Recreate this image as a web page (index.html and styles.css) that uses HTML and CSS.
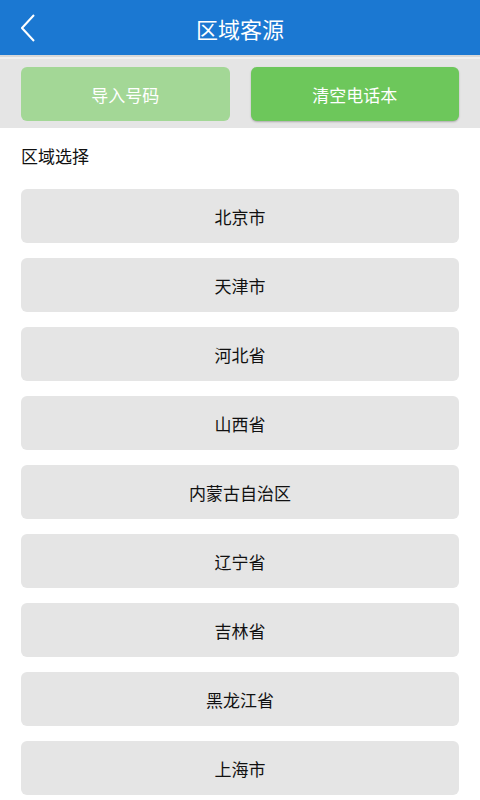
FILE: index.html
```html
<!DOCTYPE html>
<html>
<head>
	<meta charset="utf-8">
	<title>区域客源</title>
	<link rel="stylesheet" href="styles.css">
</head>
<body>
	<div class="header">
		<a class="back" href="#">
			<svg width="20" height="32" viewBox="0 0 20 32">
				<polyline points="13,1 1,14 13,27" fill="none" stroke="#fff" stroke-width="2"/>
			</svg>
		</a>
		<h1>区域客源</h1>
	</div>
	<div class="toolbar">
		<button class="btn btn-import">导入号码</button>
		<button class="btn btn-clear">清空电话本</button>
	</div>
	<div class="section">
		<div class="label">区域选择</div>
		<ul class="area-list">
			<li>北京市</li>
			<li>天津市</li>
			<li>河北省</li>
			<li>山西省</li>
			<li>内蒙古自治区</li>
			<li>辽宁省</li>
			<li>吉林省</li>
			<li>黑龙江省</li>
			<li>上海市</li>
		</ul>
	</div>
</body>
</html>
```

FILE: styles.css
```css
body {
  margin: 0;
  padding: 0;
  font-family: "Noto Sans CJK SC", "Noto Sans", sans-serif;
  background-color: #fff;
  overflow: hidden;
}

.header {
  height: 55px;
  background-color: #1b78d2;
  display: flex;
  align-items: center;
  justify-content: center;
  position: relative;
  border-bottom: 2px solid #d8d8d8;
}

.back {
  position: absolute;
  left: 21px;
  top: 14px;
  display: block;
}

.back svg {
  display: block;
}

h1 {
  margin: 0;
  color: #fff;
  font-size: 22px;
  font-weight: normal;
  line-height: 1;
}

.toolbar {
  background-color: #e5e5e5;
  border-top: 2px solid #f0f0f0;
  padding: 8px 21px 7px;
  display: flex;
  gap: 21px;
}

.btn {
  flex: 1;
  height: 54px;
  border: none;
  border-radius: 6px;
  color: #fff;
  font-family: inherit;
  font-size: 17px;
  cursor: pointer;
}

.btn-import {
  background-color: #a3d796;
}

.btn-clear {
  background-color: #6dc75b;
  box-shadow: 0 1px 2px rgba(0, 0, 0, 0.25);
}

.section {
  padding: 16px 21px 0;
}

.label {
  font-size: 17px;
  line-height: 24px;
  color: #111;
  margin-bottom: 21px;
}

.area-list {
  list-style: none;
  margin: 0;
  padding: 0;
}

.area-list li {
  height: 54px;
  margin-bottom: 15px;
  border-radius: 6px;
  background-color: #e5e5e5;
  display: flex;
  align-items: center;
  justify-content: center;
  font-size: 17px;
  color: #111;
}
```
